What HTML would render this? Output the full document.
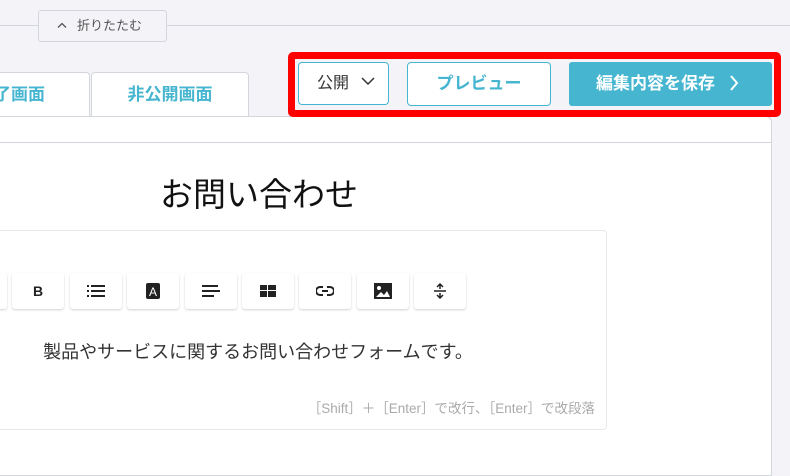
<!DOCTYPE html>
<html><head><meta charset="utf-8"><style>
*{box-sizing:border-box;margin:0;padding:0}
body{width:790px;height:470px;overflow:hidden;background:#f4f4f8;font-family:"Liberation Sans","Noto Sans CJK JP",sans-serif;position:relative}
.a{position:absolute}
.tb{position:absolute;top:273px;width:52px;height:36px;background:#fff;border-radius:3px;box-shadow:0 1px 2px rgba(0,0,0,.18);display:flex;align-items:center;justify-content:center}
</style></head><body>
<div class="a" style="left:0;top:25px;width:790px;height:1px;background:#d3d6dc"></div>
<div class="a" style="left:38px;top:10px;width:129px;height:32px;background:#f4f4f8;border:1px solid #d3d6dc;border-radius:3px;font-size:13px;color:#555;line-height:30px;padding-left:18px">
<svg width="10" height="6" style="margin-right:10px;vertical-align:2px"><path d="M1 5.5L5 1.5L9 5.5" fill="none" stroke="#555" stroke-width="1.3"/></svg>折りたたむ</div>

<div class="a" style="left:-10px;top:72px;width:100px;height:46px;background:#fff;border:1px solid #d3d6dc;border-bottom:none;border-radius:4px 4px 0 0;color:#45b5d0;font-weight:bold;font-size:17px;line-height:44px;text-align:right;padding-right:44px;white-space:nowrap">了画面</div>
<div class="a" style="left:91px;top:72px;width:158px;height:46px;background:#fff;border:1px solid #d3d6dc;border-bottom:none;border-radius:4px 4px 0 0;color:#45b5d0;font-weight:bold;font-size:17px;line-height:44px;text-align:center">非公開画面</div>

<div class="a" style="left:-5px;top:116px;width:777px;height:360px;background:#fff;border:1px solid #d3d6dc;border-radius:0 6px 0 0"></div>
<div class="a" style="left:0;top:117px;width:249px;height:2px;background:#fff"></div>
<div class="a" style="left:0;top:142px;width:771px;height:1px;background:#d3d6dc"></div>

<div class="a" style="left:288px;top:52px;width:493px;height:65px;border:7px solid #f00;border-radius:5px;background:#f4f4f8"></div>
<div class="a" style="left:298px;top:62px;width:91px;height:43px;background:#fff;border:1px solid #45b5d0;border-radius:4px;font-size:16px;color:#333;line-height:41px;padding-left:18px">公開<svg width="14" height="8" style="margin-left:12px;vertical-align:3px"><path d="M1 1L7 7L13 1" fill="none" stroke="#333" stroke-width="1.5"/></svg></div>
<div class="a" style="left:407px;top:62px;width:144px;height:44px;background:#fff;border:1px solid #45b5d0;border-radius:4px;font-size:17px;color:#45b5d0;font-weight:bold;line-height:42px;text-align:center">プレビュー</div>
<div class="a" style="left:569px;top:62px;width:203px;height:44px;background:#45b5d0;border-radius:3px;font-size:17px;color:#fff;font-weight:bold;line-height:44px;padding-left:27px;white-space:nowrap">編集内容を保存<svg width="10" height="16" style="margin-left:14px;vertical-align:-2px"><path d="M2 1L8 8L2 15" fill="none" stroke="#fff" stroke-width="2"/></svg></div>

<div class="a" style="left:0;top:168px;width:518px;text-align:center;font-size:33px;color:#111">お問い合わせ</div>

<div class="a" style="left:-5px;top:230px;width:612px;height:200px;border:1px solid #e5e7ea;border-radius:4px;background:#fff"></div>
<div class="tb" style="left:-45px"></div>
<div class="tb" style="left:12px;font-weight:bold;font-size:14px;color:#222">B</div>
<div class="tb" style="left:70px"><svg width="18" height="12"><g fill="#222"><rect x="0" y="0" width="2" height="2"/><rect x="0" y="5" width="2" height="2"/><rect x="0" y="10" width="2" height="2"/><rect x="4" y="0" width="14" height="2"/><rect x="4" y="5" width="14" height="2"/><rect x="4" y="10" width="14" height="2"/></g></svg></div>
<div class="tb" style="left:127px"><svg width="14" height="16"><rect width="14" height="16" rx="2" fill="#222"/><text x="7" y="13" font-size="12" font-family="Liberation Sans" fill="#fff" text-anchor="middle">A</text></svg></div>
<div class="tb" style="left:185px"><svg width="18" height="12"><g fill="#222"><rect y="0" width="16" height="2"/><rect y="5" width="18" height="2"/><rect y="10" width="12" height="2"/></g></svg></div>
<div class="tb" style="left:242px"><svg width="16" height="12"><g fill="#222"><rect width="7" height="5"/><rect x="8" width="8" height="5"/><rect y="6" width="7" height="6"/><rect x="8" y="6" width="8" height="6"/></g></svg></div>
<div class="tb" style="left:299px"><svg width="18" height="10"><path d="M7 1H4a4 4 0 0 0 0 8h3M11 1h3a4 4 0 0 1 0 8h-3M6 5h6" fill="none" stroke="#222" stroke-width="2"/></svg></div>
<div class="tb" style="left:357px"><svg width="18" height="16"><rect width="18" height="16" fill="#222"/><circle cx="5" cy="5" r="2" fill="#fff"/><path d="M2 14L7 9L10 12L13 8L16 14Z" fill="#fff"/></svg></div>
<div class="tb" style="left:414px"><svg width="14" height="16"><path d="M7 1V6M4 4L7 1L10 4M7 15V10M4 12L7 15L10 12M1 8H13" fill="none" stroke="#222" stroke-width="1.5"/></svg></div>

<div class="a" style="left:0;top:338px;width:516px;text-align:center;font-size:18px;color:#333;white-space:nowrap">製品やサービスに関するお問い合わせフォームです。</div>
<div class="a" style="left:250px;top:397px;width:345px;text-align:right;font-size:13.5px;color:#aaa;white-space:nowrap">［Shift］＋［Enter］で改行、［Enter］で改段落</div>
</body></html>
